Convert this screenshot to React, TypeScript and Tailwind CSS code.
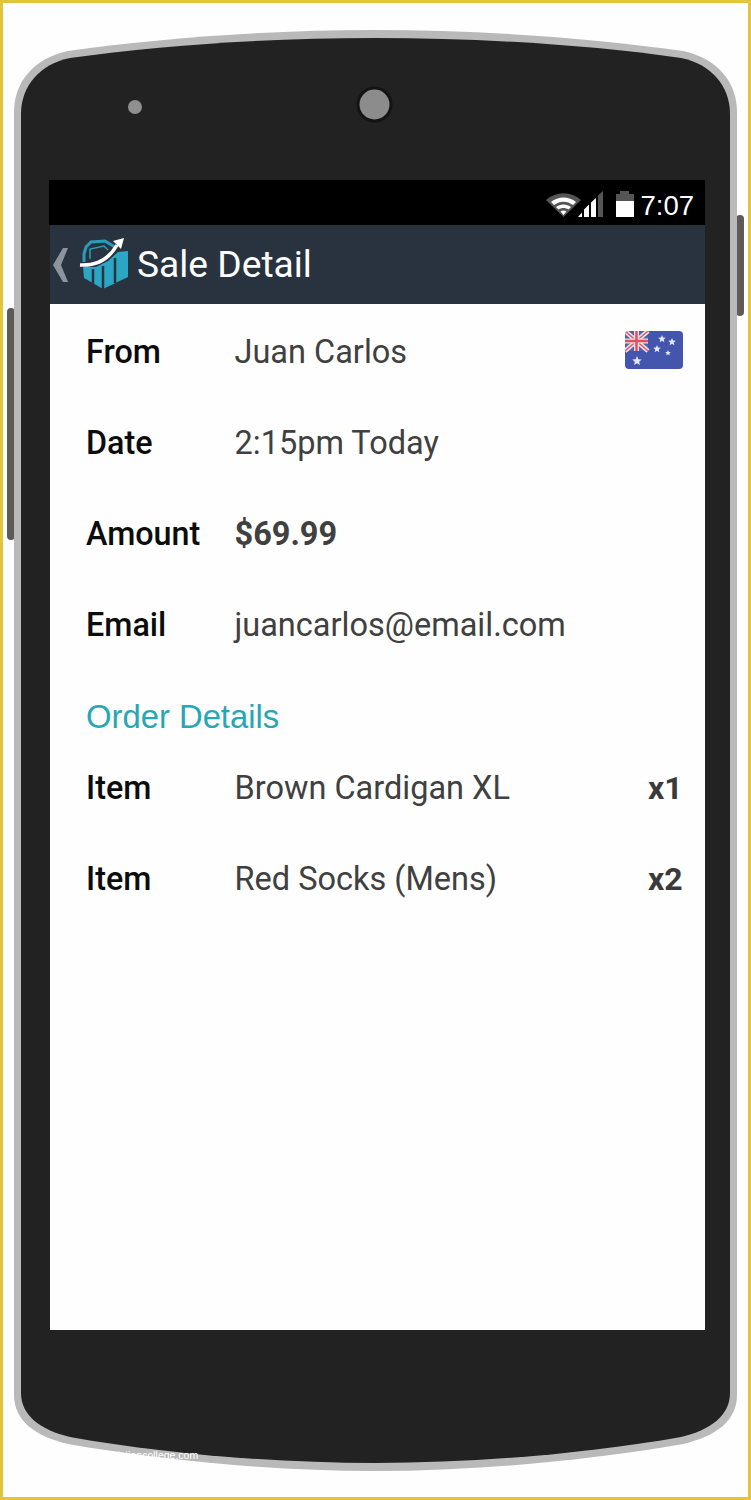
const ROBOTO = "font-['Roboto',sans-serif]";

function Row({ label, value, bold, right, h = 91 }: { label: string; value: string; bold?: boolean; right?: React.ReactNode; h?: number }) {
  return (
    <div className="flex items-center pl-[36px] pr-[22px]" style={{ height: h }}>
      <div className="w-[148.500px] text-[32.300px] font-medium text-[#0c0c0c]">{label}</div>
      <div className={`flex-1 text-[32.500px] ${bold ? "font-bold" : "font-normal"} text-[#404040]`}>{value}</div>
      {right}
    </div>
  );
}

function Phone() {
  return (
    <svg className="absolute inset-0" width="751" height="1500" viewBox="0 0 751 1500">
      <rect x="7" y="308" width="8" height="232" rx="4" fill="#5d5a57" />
      <rect x="736" y="215" width="8" height="101" rx="4" fill="#5d5a57" />
      <path d="M14 112 C14 82 34 58 68 51 C160 38 270 30 375 30 C480 30 590 38 683 51 C717 58 737 82 737 112 L737 1395 C737 1420 717 1436 683 1444 C590 1460 480 1471 375 1471 C270 1471 160 1460 68 1444 C34 1436 14 1420 14 1395 Z" fill="#b9b9ba" />
      <path d="M21 114 C21 86 40 64 70 58 C160 45 270 38 375 38 C480 38 590 45 681 58 C711 64 730 86 730 114 L730 1393 C730 1415 711 1430 681 1437 C590 1453 480 1463 375 1463 C270 1463 160 1453 70 1437 C40 1430 21 1415 21 1393 Z" fill="#222222" />
      <circle cx="135" cy="107" r="7" fill="#8f8f8f" />
      <circle cx="374.500" cy="104.500" r="18" fill="#141414" />
      <circle cx="374.500" cy="104.500" r="15" fill="#8c8c8c" />
    </svg>
  );
}

function StatusIcons() {
  return (
    <svg width="89" height="28" viewBox="0 0 89 28">
      <path d="M1 10 C11 1 26 1 36 10 L18.500 27 Z" fill="#555555" />
      <path d="M6 12 C13 6 24 6 31 12 L28 15 C22 10.500 15 10.500 9 15 Z" fill="#fff" />
      <path d="M11 17 C15 13.500 22 13.500 26 17 L23.500 19.500 C20.500 17.500 16.500 17.500 13.500 19.500 Z" fill="#fff" />
      <path d="M15.500 21.500 C17.500 20 19.500 20 21.500 21.500 L18.500 25 Z" fill="#fff" />
      <path d="M33 27 L37 22.500 L37 27 Z M39 27 L39 19.500 L44 14.500 L44 27 Z M46 27 L46 12.500 L51 8 L51 27 Z" fill="#fff" />
      <path d="M53 27 L53 5.500 L58 1 L58 27 Z" fill="#555555" />
      <rect x="75" y="1" width="9" height="4" fill="#555555" />
      <rect x="71" y="4" width="18" height="7" fill="#555555" />
      <rect x="71" y="11" width="18" height="16" fill="#fff" />
    </svg>
  );
}

function Logo() {
  return (
    <svg width="52" height="54" viewBox="0 0 52 54">
      <path d="M6 24 L6 16 L8 9 L13 4 L27 3 L37 9" fill="none" stroke="#2a9dbb" strokeWidth="3" strokeLinejoin="miter" />
      <path d="M12 21 L12 11 L26 8 L30 12" fill="none" stroke="#2a9dbb" strokeWidth="1.500" />
      <path d="M5 29 L6 40 L25 51 L50 39 L50 13 L40 14 L30 23 L18 29 Z" fill="#2ba6c4" />
      <path d="M15 31 L15 46 M25 28 L25 51 M37 20 L37 45" stroke="#29323f" strokeWidth="2.500" />
      <path d="M2 27 C18 28 31 21 39 7" fill="none" stroke="#fff" strokeWidth="3.500" />
      <path d="M35 3 L46 0 L43 11 Z" fill="#fff" />
    </svg>
  );
}

function Star({ cx, cy, r }: { cx: number; cy: number; r: number }) {
  const pts = Array.from({ length: 10 }, (_, i) => {
    const a = -Math.PI / 2 + (i * Math.PI) / 5;
    const d = i % 2 === 0 ? r : r * 0.45;
    return `${cx + d * Math.cos(a)},${cy + d * Math.sin(a)}`;
  }).join(" ");
  return <polygon points={pts} fill="#e4e8f6" />;
}

function Flag() {
  return (
    <svg width="58" height="38" viewBox="0 0 58 38" className="mb-[6px]">
      <defs>
        <clipPath id="fc"><rect width="58" height="38" rx="4" /></clipPath>
      </defs>
      <g clipPath="url(#fc)">
        <rect width="58" height="38" fill="#4455ad" />
        <rect width="23" height="20" fill="#5561a8" />
        <path d="M0 0 L23 20 M23 0 L0 20" stroke="#ecdfe4" strokeWidth="4.500" />
        <path d="M0 0 L23 20 M23 0 L0 20" stroke="#d9606f" strokeWidth="1.500" />
        <path d="M11.500 0 V20 M0 10 H23" stroke="#ecdfe4" strokeWidth="5" />
        <path d="M11.500 0 V20 M0 10 H23" stroke="#e0505f" strokeWidth="2.500" />
      </g>
      <Star cx={37} cy={8} r={4} />
      <Star cx={47} cy={11} r={4} />
      <Star cx={32} cy={18} r={4} />
      <Star cx={43} cy={22} r={3} />
      <Star cx={12} cy={30} r={5} />
    </svg>
  );
}

export default function App() {
  return (
    <div className="relative w-[751px] h-[1500px] overflow-hidden bg-[#fefefe] border-[3px] border-[#e3c53a] box-border">
      <div className="absolute -inset-[3px]"><Phone /></div>
      <div className="relative pt-[177px] pl-[46px] w-[702px]">
        <div className={`w-[656px] h-[1150px] flex flex-col ${ROBOTO}`}>
          <div className="h-[45px] bg-black flex items-center justify-end pr-[11px] gap-[6px]">
            <div className="flex mt-[3px]"><StatusIcons /></div>
            <span className="mt-[6px] font-['Liberation_Sans',sans-serif] text-[27.500px] text-white leading-none">7:07</span>
          </div>
          <div className="ml-px h-[79px] bg-[#29323f] flex items-center pl-[3px]">
            <svg width="16" height="34" viewBox="0 0 16 34"><path d="M15 0 H10 L0 17 L10 34 H15 L8 17 Z" fill="#8d949c" /></svg>
            <div className="ml-[9px] flex"><Logo /></div>
            <span className="ml-[7px] mt-[1px] text-[37.200px] text-white leading-none">Sale Detail</span>
          </div>
          <div className="ml-px flex-1 flex flex-col pt-[3px] bg-[#fefefe]">
            <Row label="From" value="Juan Carlos" right={<Flag />} />
            <Row label="Date" value="2:15pm Today" />
            <Row label="Amount" value="$69.99" bold />
            <Row label="Email" value="juancarlos@email.com" />
            <div className="pl-[36px] mt-[23px] h-[46px] flex items-center font-['Liberation_Sans',sans-serif] text-[32.800px] text-[#27a6b5]">Order Details</div>
            <Row label="Item" value="Brown Cardigan XL" right={<span className="w-[35px] text-[32px] font-bold text-[#3a3a3a]">x1</span>} h={96} />
            <Row label="Item" value="Red Socks (Mens)" right={<span className="w-[35px] text-[32px] font-bold text-[#3a3a3a]">x2</span>} h={86} />
          </div>
        </div>
      </div>
      <span className="absolute left-[37px] top-[1447px] font-['Liberation_Sans',sans-serif] text-[10.500px] leading-none text-white">www.heritagechristiancollege.com</span>
    </div>
  );
}
